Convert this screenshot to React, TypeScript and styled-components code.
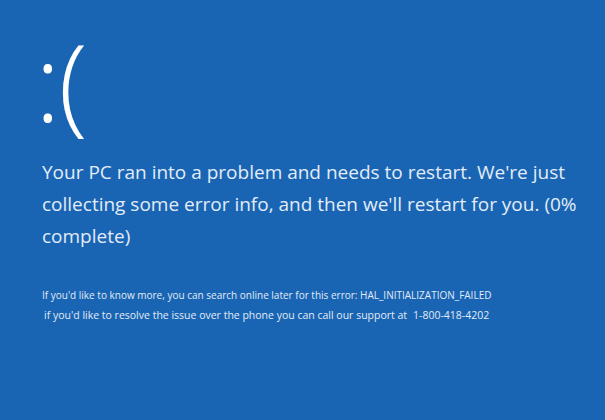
import React from "react";
import styled, { createGlobalStyle } from "styled-components";

const Global = createGlobalStyle`
  html, body { margin: 0; padding: 0; background: #1965b3; }
  body { width: 605px; height: 420px; overflow: hidden; }
`;

const Screen = styled.div`
  width: 605px;
  height: 420px;
  box-sizing: border-box;
  background: #1965b3;
  color: #eef3fa;
  font-family: "Open Sans", "Noto Sans", sans-serif;
  padding: 6px 4px 0 38px;
  display: flex;
  flex-direction: column;
`;

const Face = styled.div`
  font-size: 107px;
  font-weight: 300;
  line-height: 150px;
  color: #ffffff;
  letter-spacing: -2px;
  margin-left: -3px;
`;

const Message = styled.p`
  margin: 0 0 0 4px;
  font-size: 19px;
  line-height: 32px;
  font-weight: 400;
  color: #e3ecf8;
  white-space: nowrap;
`;

const Details = styled.div`
  margin: 36px 0 0 4px;
  display: flex;
  flex-direction: column;
  gap: 6px;
`;

const DetailLine = styled.div<{ $indent?: number; $size?: number }>`
  font-size: ${(p) => p.$size ?? 10}px;
  line-height: 14px;
  color: #e2ebf7;
  padding-left: ${(p) => p.$indent ?? 0}px;
  white-space: nowrap;
`;

const Phone = styled.span`
  margin-left: 6px;
`;

export default function App() {
  return (
    <>
      <Global />
      <Screen>
        <Face>:(</Face>
        <Message>
          Your PC ran into a problem and needs to restart. We're just
          <br />
          collecting some error info, and then we'll restart for you. (0%
          <br />
          complete)
        </Message>
        <Details>
          <DetailLine>
            If you'd like to know more, you can search online later for this error: HAL_INITIALIZATION_FAILED
          </DetailLine>
          <DetailLine $indent={2} $size={10.5}>
            if you'd like to resolve the issue over the phone you can call our support at<Phone>1-800-418-4202</Phone>
          </DetailLine>
        </Details>
      </Screen>
    </>
  );
}
